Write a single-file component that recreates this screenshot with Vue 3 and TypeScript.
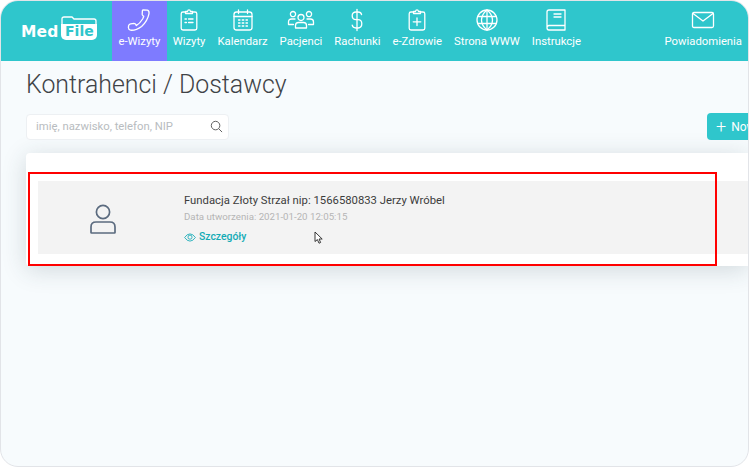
<template>
  <div class="frame">
    <header class="topbar">
      <div class="logo">
        <span class="logo-med">Med</span>
        <span class="logo-file">
          <svg class="logo-tab" viewBox="0 0 36 8" fill="none" stroke="#fff" stroke-width="1.3">
            <path d="M1 8V3Q1 1 3 1H11L13 3H33Q35 3 35 5V8" />
          </svg>
          <span class="logo-file-text">File</span>
        </span>
      </div>
      <nav class="nav">
        <a v-for="item in navItems" :key="item.label" class="nav-item" :class="{ active: item.active, push: item.push }">
          <svg class="nav-icon" viewBox="0 0 24 24" fill="none" stroke="#fff" stroke-width="1.3" stroke-linecap="round" stroke-linejoin="round">
            <path v-for="d in item.paths" :key="d" :d="d" />
          </svg>
          <span>{{ item.label }}</span>
        </a>
      </nav>
    </header>

    <main class="content">
      <h1 class="title">Kontrahenci / Dostawcy</h1>
      <div class="toolbar">
        <div class="search">
          <span class="search-text">imię, nazwisko, telefon, NIP</span>
          <svg class="search-icon" viewBox="0 0 14 14" fill="none" stroke="#555" stroke-width="1">
            <circle cx="6" cy="6" r="4.6" />
            <path d="M9.4 9.4L13 13" />
          </svg>
        </div>
        <button class="add-btn"><span class="plus">+</span>Nowy</button>
      </div>

      <section class="card">
        <div class="row">
          <div class="avatar">
            <svg viewBox="0 0 26 30" fill="none" stroke="#5b6b7f" stroke-width="1.7">
              <circle cx="13" cy="8" r="6.6" />
              <path d="M6 18H20Q25 18 25 23V28.5Q25 29 24.5 29H1.5Q1 29 1 28.5V23Q1 18 6 18Z" />
            </svg>
          </div>
          <div class="info">
            <div class="name">Fundacja Złoty Strzał nip: 1566580833 Jerzy Wróbel</div>
            <div class="date">Data utworzenia: 2021-01-20 12:05:15</div>
            <a class="details">
              <svg viewBox="0 0 14 10" fill="none" stroke="#14abb6" stroke-width="1">
                <path d="M0.7 5Q3.5 0.8 7 0.8T13.3 5Q10.5 9.2 7 9.2T0.7 5Z" />
                <circle cx="7" cy="4.6" r="2.4" />
              </svg>
              <span>Szczegóły</span>
            </a>
          </div>
        </div>
      </section>
    </main>

    <div class="highlight"></div>
    <svg class="cursor" viewBox="0 0 10 14" fill="#fff" stroke="#222" stroke-width="0.9">
      <path d="M1 1V10.5L3.4 8.6L5 12.2L6.6 11.5L5.1 8H8.2Z" />
    </svg>
  </div>
</template>

<script setup lang="ts">
interface NavItem {
  label: string
  paths: string[]
  active?: boolean
  push?: boolean
}

const navItems: NavItem[] = [
  {
    label: 'e-Wizyty',
    active: true,
    paths: [
      'M16.2 1.8L20.4 2.2Q22.4 2.8 22 5.6Q20.6 13 14.6 18.4Q9 22.6 3.6 22.2Q1.6 22 1.4 19.8L1.6 17.6Q2 16 3.6 15.8L7 15.4Q8.4 15.4 8.8 16.6L9.2 17.6Q12.8 15.6 15.6 11Q16.6 9.2 16.8 8.2L15.8 7.6Q15 7 15.2 6L15.4 2.6Q15.6 1.8 16.2 1.8Z',
    ],
  },
  {
    label: 'Wizyty',
    paths: [
      'M8.5 4H6Q4.2 4 4.2 5.8V20.2Q4.2 22 6 22H18Q19.8 22 19.8 20.2V5.8Q19.8 4 18 4H15.5',
      'M8.5 5.5V3.5H10.5Q10.8 1.8 12 1.8T13.5 3.5H15.5V5.5Z',
      'M8 11H9.4M11.5 11H16M8 14.5H9.4M11.5 14.5H16',
    ],
  },
  {
    label: 'Kalendarz',
    paths: [
      'M5.5 4H18.5Q21 4 21 6.5V19.5Q21 22 18.5 22H5.5Q3 22 3 19.5V6.5Q3 4 5.5 4Z',
      'M3 8.5H21M7.5 1.8V5.5M16.5 1.8V5.5',
      'M7.5 12H9M11.2 12H12.8M15 12H16.5M7.5 15H9M11.2 15H12.8M15 15H16.5M7.5 18H9M11.2 18H12.8M15 18H16.5',
    ],
  },
  {
    label: 'Pacjenci',
    paths: [
      'M12 6.5A3 3 0 1 0 12 12.5A3 3 0 1 0 12 6.5Z',
      'M4 3.5A2.6 2.6 0 1 0 4 8.7A2.6 2.6 0 1 0 4 3.5Z',
      'M20 3.5A2.6 2.6 0 1 0 20 8.7A2.6 2.6 0 1 0 20 3.5Z',
      'M6.5 20V17.5Q6.5 14.5 9.5 14.5H14.5Q17.5 14.5 17.5 17.5V20Z',
      'M6 11H2.5Q-0.5 11 -0.5 14V16.5H4.5',
      'M18 11H21.5Q24.5 11 24.5 14V16.5H19.5',
    ],
  },
  {
    label: 'Rachunki',
    paths: [
      'M12 1.5V22.5',
      'M16.6 6.5Q16 4 13 4H11Q7.2 4 7.2 7.7T11 11.7H13Q16.8 11.7 16.8 15.8T13 20H11Q7.8 20 7.2 17.2',
    ],
  },
  {
    label: 'e-Zdrowie',
    paths: [
      'M8.5 4H6Q4.2 4 4.2 5.8V20.2Q4.2 22 6 22H18Q19.8 22 19.8 20.2V5.8Q19.8 4 18 4H15.5',
      'M8.5 5.5V3.5H10.5Q10.8 1.8 12 1.8T13.5 3.5H15.5V5.5Z',
      'M12 10V17.5M8.2 13.8H15.8',
    ],
  },
  {
    label: 'Strona WWW',
    paths: [
      'M12 2A10 10 0 1 0 12 22A10 10 0 1 0 12 2Z',
      'M12 2Q6.5 6.5 6.5 12T12 22Q17.5 17.5 17.5 12T12 2Z',
      'M12 2V22M2.6 8.5H21.4M2.6 15.5H21.4',
    ],
  },
  {
    label: 'Instrukcje',
    paths: [
      'M3 19V4Q3 2 5 2H21V17.5H5Q3 17.5 3 19.7T5 22H21V17.5',
      'M10 6H17M10 9H17',
    ],
  },
  {
    label: 'Powiadomienia',
    push: true,
    paths: [
      'M3 4.5H21Q22.5 4.5 22.5 6V18Q22.5 19.5 21 19.5H3Q1.5 19.5 1.5 18V6Q1.5 4.5 3 4.5Z',
      'M2 5.5L12 13L22 5.5',
    ],
  },
]
</script>

<style>
html,
body {
  margin: 0;
  background: #fff;
}
</style>

<style scoped>
.frame {
  position: relative;
  width: 749px;
  height: 467px;
  box-sizing: border-box;
  overflow: hidden;
  background: #f7fbfd;
  border: 1px solid #e2e4e8;
  border-radius: 18px;
  font-family: Roboto, "Liberation Sans", sans-serif;
}

.topbar {
  display: flex;
  height: 60px;
  background: #2fc6cc;
  color: #fff;
}

.logo {
  width: 111px;
  flex: none;
  display: flex;
  align-items: flex-start;
  padding: 15px 0 0 20px;
  box-sizing: border-box;
}

.logo-med {
  margin-top: 7px;
  font-family: "DejaVu Sans", sans-serif;
  font-weight: 700;
  font-size: 15.5px;
  line-height: 18px;
  letter-spacing: 0.1px;
}

.logo-file {
  display: flex;
  flex-direction: column;
  margin-left: 3px;
}

.logo-tab {
  display: block;
  width: 36px;
  height: 8px;
}

.logo-file-text {
  width: 36px;
  height: 16px;
  background: #fff;
  border-radius: 0 0 5px 5px;
  color: #2fc6cc;
  font-family: "DejaVu Sans", sans-serif;
  font-weight: 700;
  font-size: 14px;
  line-height: 15px;
  text-align: center;
}

.nav {
  flex: 1;
  display: flex;
}

.nav-item {
  display: flex;
  flex-direction: column;
  align-items: center;
  padding: 7px 6px 0;
  font-size: 11.3px;
  line-height: 14px;
  white-space: nowrap;
}

.nav-item.active {
  padding: 7px 6.4px 0;
  background: #7e7bff;
}

.nav-item.push {
  margin-left: auto;
}

.nav-icon {
  display: block;
  width: 24px;
  height: 24px;
  margin-bottom: 3px;
  overflow: visible;
}

.content {
  padding: 0 0 0 25px;
}

.title {
  margin: 9px 0 0;
  font-size: 24.9px;
  line-height: 29px;
  font-weight: 300;
  color: #3f4347;
}

.toolbar {
  display: flex;
  justify-content: space-between;
  align-items: center;
  margin-top: 14px;
}

.search {
  width: 203px;
  height: 26px;
  box-sizing: border-box;
  display: flex;
  align-items: center;
  justify-content: space-between;
  padding: 0 5px 0 9px;
  background: #fff;
  border: 1px solid #edf0f3;
  border-radius: 4px;
}

.search-text {
  font-size: 11.3px;
  color: #b8bcc0;
}

.search-icon {
  width: 13px;
  height: 13px;
}

.add-btn {
  width: 41px;
  height: 27px;
  flex: none;
  padding: 0 0 0 9px;
  border: none;
  border-radius: 4px 0 0 4px;
  background: #2fc6cc;
  color: #fff;
  font-family: inherit;
  font-size: 12px;
  text-align: left;
  white-space: nowrap;
  overflow: hidden;
}

.plus {
  font-size: 18px;
  font-weight: 300;
  margin-right: 5px;
  vertical-align: -2px;
}

.card {
  margin-top: 13px;
  padding: 28px 0 12px 12px;
  background: #fff;
  border-radius: 4px 0 0 4px;
  box-shadow: 0 4px 24px rgba(40, 60, 70, 0.18);
}

.row {
  display: flex;
  height: 73px;
  background: #f3f3f3;
}

.avatar {
  width: 130px;
  flex: none;
  display: flex;
  align-items: center;
  justify-content: center;
  margin-right: 16px;
  padding-top: 2px;
  box-sizing: border-box;
}

.avatar svg {
  width: 26px;
  height: 30px;
}

.info {
  padding-top: 12px;
}

.name {
  font-size: 11.3px;
  line-height: 15px;
  color: #3c3c3c;
}

.date {
  margin-top: 3px;
  font-size: 9.7px;
  line-height: 12px;
  color: #b5b5b5;
}

.details {
  display: flex;
  align-items: center;
  gap: 3px;
  margin-top: 7px;
  font-size: 10.4px;
  line-height: 14px;
  font-weight: 500;
  color: #14abb6;
}

.details svg {
  width: 12px;
  height: 9px;
}

.highlight {
  position: absolute;
  left: 27px;
  top: 171px;
  width: 689px;
  height: 94px;
  box-sizing: border-box;
  border: 2px solid #f00;
}

.cursor {
  position: absolute;
  left: 313px;
  top: 230px;
  width: 10px;
  height: 14px;
}
</style>
